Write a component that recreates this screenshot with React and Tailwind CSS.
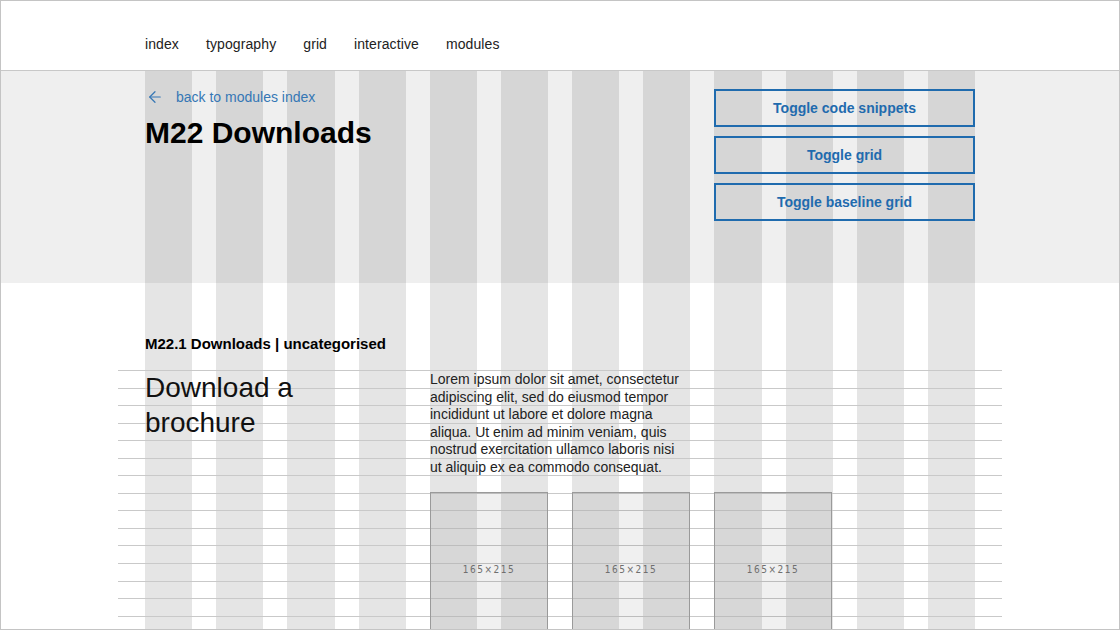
import { ArrowLeft } from 'lucide-react';

const navItems = ['index', 'typography', 'grid', 'interactive', 'modules'];
const toggles = ['Toggle code snippets', 'Toggle grid', 'Toggle baseline grid'];
const columns = Array.from({ length: 12 }, (_, i) => i);
const baselines = Array.from({ length: 16 }, (_, i) => i);

export default function App() {
  return (
    <div className="relative w-[1120px] h-[630px] overflow-hidden border border-[#c4c4c4] bg-white font-['Liberation_Sans',Arial,sans-serif] text-[#1a1a1a]">
      {/* Column grid overlay */}
      <div className="absolute inset-x-0 top-[70px] bottom-0 z-0 pointer-events-none">
        <div className="mx-auto w-[830px] h-full grid grid-cols-12 gap-x-[24px]">
          {columns.map((c) => (
            <div key={c} className="h-full bg-black/10" />
          ))}
        </div>
      </div>

      {/* Header */}
      <header className="relative z-10 h-[70px] border-b border-[#c8c8c8] bg-white">
        <nav className="mx-auto w-[830px] pt-[34px] flex gap-[27px] text-[14px] leading-[18px] tracking-[0.1px] text-[#222]">
          {navItems.map((item) => (
            <a key={item} href="#">{item}</a>
          ))}
        </nav>
      </header>

      {/* Hero */}
      <section className="h-[212px] bg-[#efefef]">
        <div className="relative z-10 mx-auto w-[830px] flex justify-between">
          <div className="pt-[17px]">
            <a href="#" className="flex items-center gap-[12px] text-[14px] leading-[18px] text-[#3577b5]">
              <ArrowLeft className="w-[18px] h-[18px] ml-[1px]" strokeWidth={1.6} />
              back to modules index
            </a>
            <h1 className="mt-[9px] text-[30px] leading-[36px] font-bold text-black">M22 Downloads</h1>
          </div>
          <div className="w-[261px] pt-[18px] flex flex-col gap-[9px]">
            {toggles.map((t) => (
              <button
                key={t}
                className="h-[38px] border-2 border-[#1f6bae] text-[14px] font-bold text-[#1f6bae]"
              >
                {t}
              </button>
            ))}
          </div>
        </div>
      </section>

      {/* Module */}
      <section className="relative z-10 mx-auto w-[830px]">
        <h2 className="mt-[52px] text-[15px] leading-[18px] font-bold text-black">
          M22.1 Downloads | uncategorised
        </h2>

        <div className="relative mt-[17px] flex">
          {/* Baseline grid overlay */}
          <div className="absolute -left-[27px] top-0 w-[884px] flex flex-col pointer-events-none">
            {baselines.map((b) => (
              <div key={b} className="h-[17.55px] border-t border-[#c9c9c9]" />
            ))}
          </div>

          <h3 className="relative w-[285px] text-[28px] leading-[35px] text-[#111]">
            Download a<br />brochure
          </h3>

          <div className="relative w-[403px]">
            <p className="w-[256px] pt-[1px] text-[14px] leading-[17.5px] text-[#222]">
              Lorem ipsum dolor sit amet, consectetur adipiscing elit, sed do eiusmod tempor
              incididunt ut labore et dolore magna aliqua. Ut enim ad minim veniam, quis
              nostrud exercitation ullamco laboris nisi ut aliquip ex ea commodo consequat.
            </p>
            <div className="mt-[16px] flex gap-[24px]">
              {[0, 1, 2].map((i) => (
                <div
                  key={i}
                  className="w-[118px] h-[154px] border border-[#9a9a9a] bg-black/[0.06] flex items-center justify-center"
                >
                  <span className="font-['DejaVu_Sans_Condensed','Liberation_Sans_Narrow',sans-serif] text-[10px] tracking-[1.5px] text-[#6f6f6f]">
                    165×215
                  </span>
                </div>
              ))}
            </div>
          </div>
        </div>
      </section>
    </div>
  );
}
